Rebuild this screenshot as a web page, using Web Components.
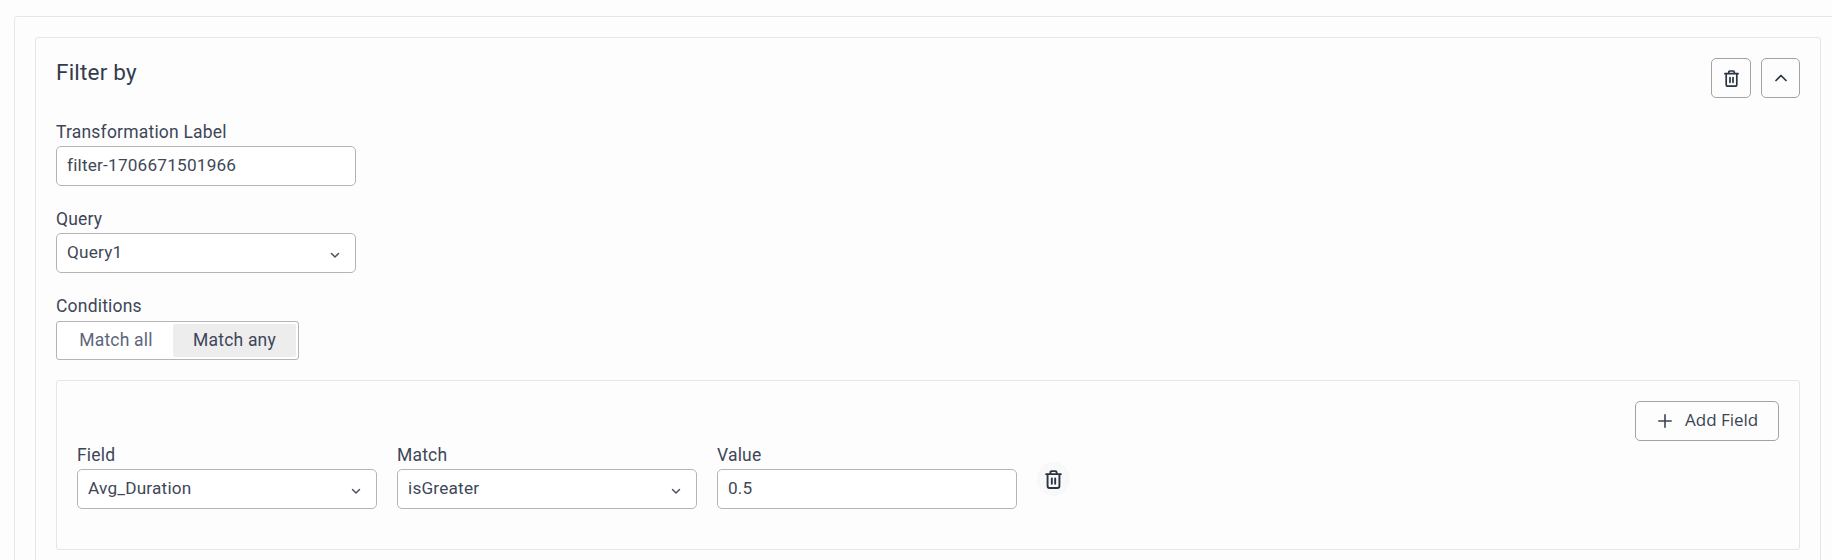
<!DOCTYPE html>
<html lang="en">
<head>
<meta charset="utf-8">
<title>Filter by</title>
<style>
html,body{margin:0;padding:0;height:100%;background:#fdfdfd;overflow:hidden}
body{font:17.5px/24px Roboto,sans-serif;letter-spacing:.2px;color:#303a4a;padding:16px 0 0 14px;box-sizing:border-box}
</style>
</head>
<body>
<template id="t-panel">
<style>
:host{display:block;box-sizing:border-box;width:1830px;height:700px;border:1px solid #e6e6e6;border-radius:3px;padding:20px}
</style>
<slot></slot>
</template>

<template id="t-card">
<style>
:host{display:block;box-sizing:border-box;width:1786px;height:700px;border:1px solid #e6e6e6;border-radius:3px;padding:20px}
header{display:flex;justify-content:space-between;align-items:flex-start;height:64px}
h2{margin:0;font:400 22.5px/28px Roboto,sans-serif;letter-spacing:.2px;color:#323c4c}
.acts{display:flex;gap:10px}
.stack{display:flex;flex-direction:column;gap:23px}
</style>
<header><h2><slot name="title"></slot></h2><div class="acts"><slot name="actions"></slot></div></header>
<div class="stack"><slot></slot></div>
</template>

<template id="t-icon-button">
<style>
:host{display:flex;box-sizing:border-box;width:40px;height:40px;border:1px solid #a3a3a3;border-radius:5px;align-items:center;justify-content:center;color:#2a3442}
:host([narrow]){width:39px}
</style>
<slot></slot>
</template>

<template id="t-field">
<style>
:host{display:flex;flex-direction:column;width:300px;color:#3d4657}
.l{height:24px;margin-top:calc(-2px - var(--s,0px));margin-bottom:calc(2px + var(--s,0px));line-height:24px}
</style>
<div class="l"><slot name="label"></slot></div>
<slot></slot>
</template>

<template id="t-box">
<style>
:host{display:flex;box-sizing:border-box;height:40px;border:1px solid #b4b4b4;border-radius:5px;align-items:center;justify-content:space-between;padding:0 10px;background:#fff;color:#3f4858;line-height:38px;font-size:17.2px}
span{margin-top:-2px}
</style>
<span><slot></slot></span>
<slot name="end"></slot>
</template>

<template id="t-select">
<style>
:host{display:block}
svg{display:block;margin-right:4px;margin-top:3px}
</style>
<x-box><slot></slot><svg slot="end" width="12" height="12" viewBox="0 0 12 12" fill="none" stroke="#4a5465" stroke-width="1.5" stroke-linecap="round" stroke-linejoin="round"><path d="M2.500 4.500 6 8l3.500-3.500"/></svg></x-box>
</template>

<template id="t-toggle">
<style>
:host{display:flex;box-sizing:border-box;width:243px;height:39px;border:1px solid #b4b4b4;border-radius:3px;padding:2px;background:#fff;margin-bottom:-3px}
</style>
<slot></slot>
</template>

<template id="t-toggle-item">
<style>
:host{display:flex;box-sizing:border-box;height:33px;padding-bottom:2px;align-items:center;justify-content:center;width:114px;color:#5b6679;border-radius:2px}
:host([active]){width:123px;background:#ededee;color:#3d4657}
</style>
<slot></slot>
</template>

<template id="t-group">
<style>
:host{display:block;box-sizing:border-box;width:1744px;height:170px;border:1px solid #e6e6e6;border-radius:3px;padding:20px}
.top{display:flex;justify-content:flex-end;height:40px;margin-bottom:4px}
.row{display:flex;gap:20px}
</style>
<div class="top"><slot name="action"></slot></div>
<div class="row"><slot></slot></div>
</template>

<template id="t-add">
<style>
:host{display:flex;box-sizing:border-box;width:144px;height:40px;border:1px solid #a3a3a3;border-radius:5px;align-items:center;padding-left:22px;gap:13px;color:#3a4454;font:17px/24px "Open Sans",sans-serif;letter-spacing:0}
svg{display:block;flex:none}
span{margin-top:-3px}
</style>
<svg width="14" height="14" viewBox="0 0 14 14" fill="none" stroke="#3a4454" stroke-width="1.6" stroke-linecap="round"><path d="M7 .8v12.400M.8 7h12.400"/></svg><span><slot></slot></span>
</template>

<template id="t-trash">
<style>
:host{display:block;line-height:0;--w:15px;--h:17px}
:host([large]){--w:17px;--h:19px}
svg{display:block;width:var(--w);height:var(--h)}
</style>
<svg viewBox="0 0 15 17" fill="none" stroke="currentColor" stroke-width="1.7" stroke-linecap="round" stroke-linejoin="round"><path d="M.9 3.700h13.200M4.700 3.500V2.200c0-.7.5-1.200 1.200-1.200h3.200c.7 0 1.200.5 1.200 1.200v1.300M2.200 3.700v10.700c0 1 .7 1.700 1.700 1.700h7.200c1 0 1.700-.7 1.700-1.700V3.700M6 7.500v4.800M9 7.500v4.800"/></svg>
</template>

<template id="t-round-action">
<style>
:host{display:flex;width:33px;height:34px;border-radius:50%;background:#f8f8f8;align-items:center;justify-content:center;color:#2a3442;margin-top:17px}
</style>
<slot></slot>
</template>

<x-panel>
  <x-card>
    <span slot="title">Filter by</span>
    <x-icon-button slot="actions"><x-trash></x-trash></x-icon-button>
    <x-icon-button slot="actions" narrow><svg width="16" height="16" viewBox="0 0 16 16" fill="none" stroke="#2a3442" stroke-width="1.7" stroke-linecap="round" stroke-linejoin="round"><path d="M3 10.500 8 5.500l5 5"/></svg></x-icon-button>

    <x-field><span slot="label">Transformation Label</span><x-box>filter-1706671501966</x-box></x-field>
    <x-field><span slot="label">Query</span><x-select>Query1</x-select></x-field>
    <x-field style="margin-top:1px;--s:1px"><span slot="label">Conditions</span>
      <x-toggle><x-toggle-item>Match all</x-toggle-item><x-toggle-item active>Match any</x-toggle-item></x-toggle>
    </x-field>
    <x-group>
      <x-add slot="action">Add Field</x-add>
      <x-field><span slot="label">Field</span><x-select>Avg_Duration</x-select></x-field>
      <x-field><span slot="label">Match</span><x-select>isGreater</x-select></x-field>
      <x-field><span slot="label">Value</span><x-box>0.5</x-box></x-field>
      <x-round-action><x-trash large></x-trash></x-round-action>
    </x-group>
  </x-card>
</x-panel>

<script>
const names = ['panel','card','icon-button','field','box','select','toggle','toggle-item','group','add','trash','round-action'];
for (const n of names) {
  customElements.define('x-' + n, class extends HTMLElement {
    constructor() {
      super();
      this.attachShadow({mode:'open'}).appendChild(document.getElementById('t-' + n).content.cloneNode(true));
    }
  });
}
</script>
</body>
</html>
